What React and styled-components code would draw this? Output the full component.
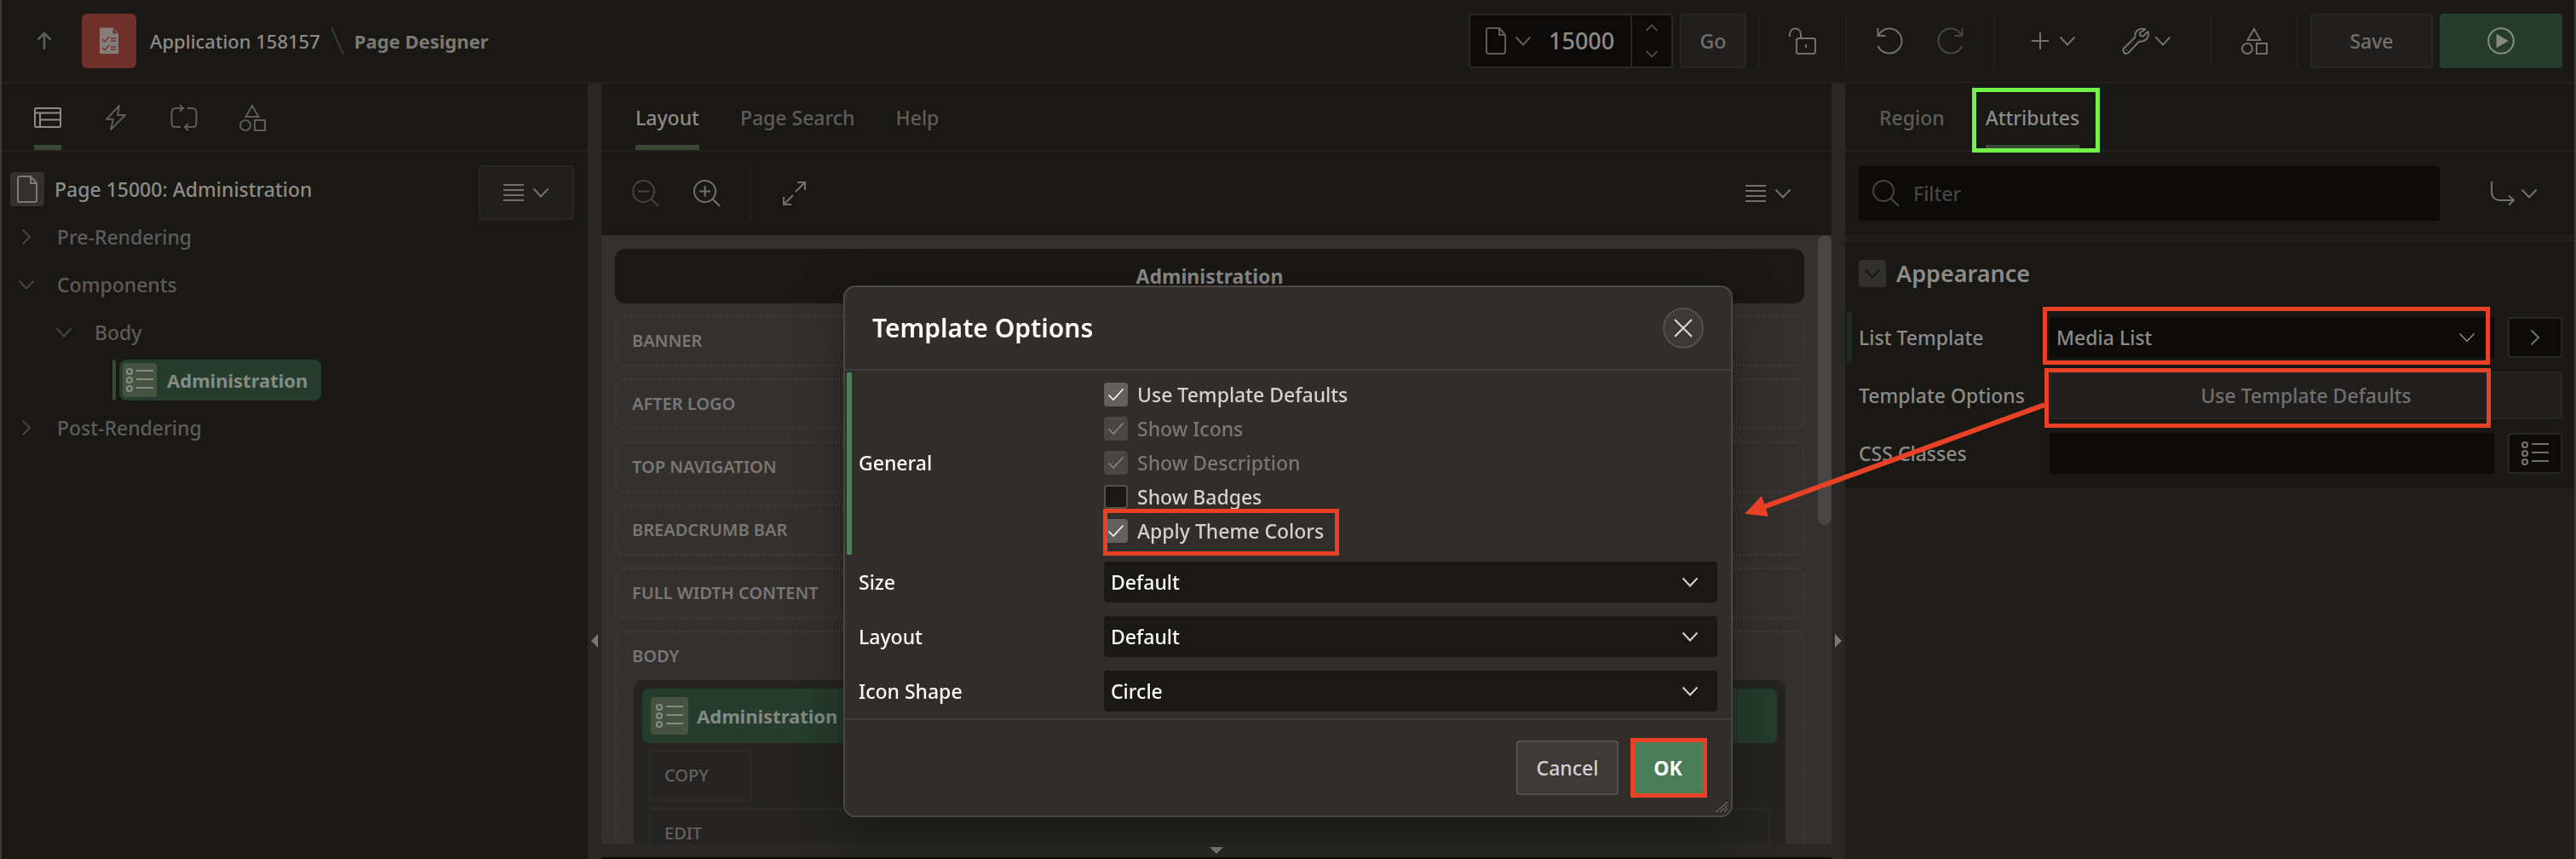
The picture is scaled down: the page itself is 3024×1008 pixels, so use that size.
import React from "react";
import styled, { createGlobalStyle, css } from "styled-components";

const c = {
  bg: "#191815",
  field: "#0c0b09",
  raised: "#201f1d",
  line: "#22211f",
  split: "#282725",
  canvas: "#33302e",
  text: "#8d8b88",
  soft: "#72706d",
  mute: "#5e5c59",
  faint: "#474542",
  green: "#263c2d",
  red: "#e94126",
  lime: "#71f447",
};

const Global = createGlobalStyle`
  *, *::before, *::after { box-sizing: border-box; }
  body { margin: 0; background: ${c.bg}; }
  body, button, input, select {
    font-family: "Noto Sans", "Open Sans", sans-serif;
    font-size: 23px;
    font-weight: 500;
    line-height: 32px;
  }
  button { padding: 0; margin: 0; border: 0; background: none; color: inherit; cursor: pointer; }
  svg { display: block; flex: none; }
  ul, h1, h2, fieldset { margin: 0; padding: 0; list-style: none; border: 0; }
`;

/* ---------- icons ---------- */

const Svg = ({ w = 32, h = w, sw = 2, children, ...rest }) => (
  <svg width={w} height={h} viewBox={`0 0 ${w} ${h}`} fill="none" stroke="currentColor" strokeWidth={sw} aria-hidden="true" {...rest}>
    {children}
  </svg>
);
const ChevronDown = (p) => <Svg w={20} h={12} {...p}><path d="M1.500 1.500L10 10.500L18.500 1.500" /></Svg>;
const ChevronRight = (p) => <Svg w={12} h={20} {...p}><path d="M1.500 1.500L10 10L1.500 18.500" /></Svg>;
const CheckMark = (p) => <Svg w={20} h={16} sw={1.6} {...p}><path d="M1.500 8.500L7 14L18.500 1.500" /></Svg>;
const SpinUp = () => <Svg w={16} h={9} sw={1.5}><path d="M1.500 8L8 1.500L14.500 8" /></Svg>;
const SpinDown = () => <Svg w={16} h={9} sw={1.5}><path d="M1.500 1L8 7.500L14.500 1" /></Svg>;
const ArrowUp = () => <Svg sw={2.5}><path d="M16 26V7M8.500 14.500L16 7L23.500 14.500" /></Svg>;
const FileIcon = () => <Svg><path d="M5 3a2 2 0 0 1 2-2h13l7 8v20a2 2 0 0 1-2 2H7a2 2 0 0 1-2-2zM20 1v8h7" /></Svg>;
const Layout = () => <Svg><rect x="1" y="5" width="30" height="22" rx="1.500" /><path d="M1 10.500h30M7 10.500V27M7 18.500h24" /></Svg>;
const Bolt = () => <Svg><path d="M20 2L5 18h8L10 30L27 13h-9z" strokeLinejoin="round" /></Svg>;
const Cycle = () => <Svg><path d="M12 27H6a4.500 4.500 0 0 1-4.500-4.500v-13A4.500 4.500 0 0 1 6 5h8M11 1l4 4-4 4M20 5h6a4.500 4.500 0 0 1 4.500 4.500v13A4.500 4.500 0 0 1 26 27h-8M21 23l-4 4 4 4" /></Svg>;
const Shapes = () => <Svg><path d="M16 2L23.500 15H8.500z" /><circle cx="8" cy="25" r="6" /><rect x="19" y="19" width="12" height="12" /></Svg>;
const Bars = () => <Svg w={24} h={22}><path d="M0 2h24M0 8h24M0 14h24M0 20h24" /></Svg>;
const ListIcon = () => <Svg sw={2.2}><circle cx="4" cy="6" r="3" /><circle cx="4" cy="16" r="3" /><circle cx="4" cy="26" r="3" /><path d="M12 5h20M12 15h20M12 25h20" /></Svg>;
const Zoom = ({ plus }) => <Svg><circle cx="13.500" cy="13.500" r="12.500" /><path d={`M22 22L31 31M7 13.500h13${plus ? "M13.500 7v13" : ""}`} /></Svg>;
const Search = () => <Svg><circle cx="13" cy="13" r="12" /><path d="M21.500 21.500L31 31" /></Svg>;
const Expand = () => <Svg><path d="M20 3h9v9M29 3L18 14M13 29H4V20M4 29L15 18" /></Svg>;
const Unlock = () => <Svg><rect x="9" y="13" width="22" height="18" rx="2" /><path d="M1 11V8a6.500 6.500 0 0 1 13 0v5M20 20v4" /></Svg>;
const Undo = () => <Svg><path d="M2.500 1v9h9M3 10C6 4 10.500 1.500 16 1.500c8 0 14.500 6.500 14.500 14.500S24 30.500 16 30.500C10 30.500 5 27.500 2.500 22" /></Svg>;
const Redo = () => <Svg><path d="M29.500 1v9h-9M29 10C26 4 21.500 1.500 16 1.500C8 1.500 1.500 8 1.500 16S8 30.500 16 30.500c6 0 11-3 13.500-8.500" /></Svg>;
const Plus = () => <Svg><path d="M16 6v20M6 16h20" /></Svg>;
const Wrench = () => <Svg strokeLinejoin="round"><path d="M27.500 2.500C22 .200 16.500 3.200 15.500 8c-.300 1.500 0 3-.200 3.700L2.500 24.500c-2 2.200-1 6.500 2.500 6.500 1 0 2-.500 2.700-1.200L20 16.700c1-.200 2.300.100 3.700-.200C29.500 15.500 32.500 10 30.500 5L25 10.500l-3.500-.500-.500-3.500z" /><path d="M5 27h1" /></Svg>;
const Play = () => <Svg><circle cx="16" cy="16" r="14.800" /><path d="M11 8.500L24 16L11 23.500z" fill="currentColor" strokeWidth="1" /></Svg>;
const Goto = () => <Svg><path d="M4 2v13a9 9 0 0 0 9 9h17M24 18.500l6 5.500-6 5.500" /></Svg>;
const Close = () => <Svg w={24}><path d="M2 2L22 22M22 2L2 22" /></Svg>;
const AppGlyph = () => (
  <Svg w={24} h={32} stroke="none">
    <path d="M1 0.500h15l7 7.500v23H1z" fill="#847d7a" />
    <path d="M16 0.500v7.500h7z" fill="#6f302c" stroke="#847d7a" strokeWidth="1" />
    <path d="M4 14l3 3 5-6M4 24l3 3 5-6M14 13h6M14 16h6M14 23h6M14 26h6" stroke="#6f302c" strokeWidth="1.500" />
  </Svg>
);
const Slash = () => <Svg w={16} h={34} stroke="#3b3936"><path d="M1 1L15 33" /></Svg>;

/* ---------- shared parts ---------- */

const Shell = styled.div`
  display: flex;
  flex-direction: column;
  height: 100vh;
  border: solid #3b3a39;
  border-width: 0 2px;
  color: ${c.text};
`;

const Callout = styled.span`
  position: absolute;
  z-index: 3;
  inset: ${(p) => p.$inset};
  border: 5px solid ${(p) => p.$color || c.red};
  pointer-events: none;
`;

const IconButton = styled.button`
  display: flex;
  align-items: center;
  justify-content: center;
  gap: ${(p) => p.$gap || 6}px;
  width: ${(p) => p.$width || 64}px;
  height: 64px;
  color: ${(p) => (p.$dim ? c.faint : c.soft)};
  ${(p) => p.$boxed && css`
    border: 2px solid ${c.split};
    border-radius: 4px;
    background: ${c.raised};
  `}
`;

const Divider = styled.span`
  width: 2px;
  height: 64px;
  margin: 0 18px;
  background: ${c.line};
`;

/* ---------- header ---------- */

const Header = styled.header`
  display: flex;
  align-items: center;
  justify-content: space-between;
  height: 98px;
  padding: 0 14px 0 34px;
  border-bottom: 2px solid ${c.line};
`;
const Crumbs = styled.nav`
  display: flex;
  align-items: center;
  gap: 12px;
`;
const UpLink = styled.a`
  margin-right: 16px;
  color: ${c.mute};
`;
const AppBadge = styled.span`
  display: grid;
  place-items: center;
  width: 64px;
  height: 64px;
  margin-right: 4px;
  border-radius: 6px;
  background: #6f302c;
`;
const Crumb = styled.a`
  color: ${(p) => (p.$current ? "#7b7976" : c.text)};
  font-weight: ${(p) => (p.$current ? 700 : 500)};
  font-size: 22px;
  text-decoration: none;
`;
const Tools = styled.div`
  display: flex;
`;
const ToolGroup = styled.div`
  display: flex;
  gap: ${(p) => p.$gap || 0}px;
  padding: ${(p) => p.$pad || "0 18px"};
  border-left: ${(p) => (p.$first ? 0 : 2)}px solid ${c.line};
`;
const PageField = styled.div`
  display: flex;
  align-items: center;
  width: 240px;
  height: 64px;
  border: 2px solid ${c.split};
  border-radius: 4px;
  background: ${c.field};
  color: ${c.mute};
`;
const PagePicker = styled.button`
  display: flex;
  align-items: center;
  gap: 6px;
  padding-left: 14px;
`;
const PageNumber = styled.input`
  flex: 1;
  min-width: 0;
  padding: 0 0 0 20px;
  border: 0;
  outline: 0;
  background: none;
  color: ${c.text};
  font-size: 27px;
`;
const Spinner = styled.div`
  display: flex;
  flex-direction: column;
  align-items: center;
  justify-content: space-between;
  width: 48px;
  height: 60px;
  padding: 10px 0;
  border-left: 2px solid ${c.split};
`;
const TextButton = styled.button`
  display: grid;
  place-items: center;
  width: ${(p) => p.$width}px;
  height: 64px;
  border: 2px solid ${(p) => (p.$hot ? c.green : c.split)};
  border-radius: 4px;
  background: ${(p) => (p.$hot ? c.green : c.raised)};
  color: ${(p) => (p.$hot ? "#868b84" : c.soft)};
`;

/* ---------- panels ---------- */

const Main = styled.main`
  display: grid;
  grid-template-columns: minmax(0, 688fr) 16px minmax(0, 1444fr) 16px minmax(0, 856fr);
  flex: 1;
  min-height: 0;
`;
const Panel = styled.section`
  display: flex;
  flex-direction: column;
  min-height: 0;
  background: ${(p) => p.$bg || c.bg};
`;
const Splitter = styled.div`
  display: flex;
  justify-content: center;
  padding-top: 646px;
  background: ${c.split};
  color: #7a7875;
`;
const BottomSplitter = styled.div`
  display: grid;
  place-items: center;
  height: 18px;
  border-bottom: 2px solid ${c.field};
  background: ${c.split};
  color: #7a7875;
`;
const TabBar = styled.div`
  display: flex;
  flex: none;
  gap: 48px;
  height: 80px;
  padding: 0 ${(p) => p.$pad || 40}px;
  border-bottom: 2px solid ${c.line};
  background: ${c.bg};
`;
const Tab = styled.button`
  position: relative;
  display: flex;
  align-items: center;
  height: 78px;
  padding-top: 8px;
  border-bottom: 6px solid ${(p) => (p["aria-selected"] ? "#3a4834" : "transparent")};
  color: ${(p) => (p["aria-selected"] ? c.text : c.mute)};
`;

/* ---------- tree ---------- */

const TreeArea = styled.div`
  display: flex;
  align-items: flex-start;
  padding: 16px 16px 0 10px;
`;
const Tree = styled.ul`
  flex: 1;
  min-width: 0;
`;
const Row = styled.li`
  display: flex;
  align-items: center;
  gap: ${(p) => p.$gap || 18}px;
  height: 56px;
  padding-left: ${(p) => p.$indent || 0}px;
  color: ${(p) => (p.$root ? c.text : c.mute)};
`;
const Toggle = styled.button`
  display: grid;
  place-items: center;
  width: 37px;
  height: 32px;
  color: ${c.faint};
`;
const TypeIcon = styled.span`
  display: grid;
  place-items: center;
  width: ${(p) => p.$size || 40}px;
  height: ${(p) => p.$size || 40}px;
  border-radius: 4px;
  background: ${(p) => (p.$green ? "#465341" : "#33302e")};
  color: ${(p) => (p.$green ? "#858a82" : "#7b7976")};
`;
const NodeMark = styled.span`
  width: 4px;
  height: 48px;
  border-radius: 2px;
  background: #3a4834;
`;
const Node = styled.span`
  display: flex;
  align-items: center;
  gap: 12px;
  height: 48px;
  padding: 0 16px 0 4px;
  border-radius: 8px;
  background: ${c.green};
  color: #858a82;
  font-weight: 700;
  font-size: 22px;
`;

/* ---------- canvas ---------- */

const CanvasTools = styled.div`
  display: flex;
  flex: none;
  align-items: center;
  height: 98px;
  padding: 0 18px 0 20px;
  background: ${c.bg};
`;
const Push = styled.span`
  flex: 1;
`;
const Canvas = styled.div`
  position: relative;
  display: flex;
  flex: 1;
  flex-direction: column;
  gap: 14px;
  min-height: 0;
  padding: 16px 32px 0 16px;
  overflow: hidden;
  background: ${c.canvas};
`;
const ScrollThumb = styled.span`
  position: absolute;
  top: 0;
  right: 0;
  width: 16px;
  height: 340px;
  border-radius: 8px;
  background: #474644;
`;
const PageTitle = styled.h2`
  display: grid;
  flex: none;
  place-items: center;
  height: 64px;
  border-radius: 12px;
  background: ${c.bg};
  font-size: 23px;
  font-weight: 700;
`;
const Slot = styled.div`
  flex: none;
  border: 2px dotted #3f3d3a;
  border-radius: 10px;
`;
const SlotLabel = styled.div`
  display: flex;
  align-items: center;
  height: 56px;
  padding: 0 18px;
  color: #797774;
  font-size: 20px;
  font-weight: 600;
`;
const Region = styled.div`
  display: flex;
  flex-direction: column;
  align-items: flex-start;
  gap: 8px;
  height: 260px;
  margin: 0 20px;
  padding: 10px;
  border-radius: 10px;
  background: #252422;
`;
const RegionHead = styled.div`
  display: flex;
  flex: none;
  align-self: stretch;
  align-items: center;
  gap: 10px;
  height: 64px;
  padding: 0 10px;
  border-radius: 8px;
  background: ${c.green};
  color: #858a82;
  font-size: 22px;
  font-weight: 700;
`;
const ButtonSlot = styled.div`
  display: flex;
  flex: none;
  align-items: center;
  align-self: ${(p) => (p.$wide ? "stretch" : "flex-start")};
  height: 60px;
  min-width: 120px;
  margin: 0 8px;
  padding: 0 16px;
  border: 2px dotted #33312f;
  border-radius: 4px;
  color: #63615e;
  font-size: 20px;
`;

/* ---------- property editor ---------- */

const FilterBar = styled.div`
  display: flex;
  flex: none;
  align-items: center;
  gap: 14px;
  height: 106px;
  padding-left: 16px;
  border-bottom: 8px solid ${c.raised};
  background: ${c.bg};
`;
const FilterBox = styled.label`
  display: flex;
  flex: 1;
  align-items: center;
  gap: 16px;
  height: 64px;
  padding: 0 16px;
  border-radius: 4px;
  background: ${c.field};
  color: ${c.faint};
`;
const FilterInput = styled.input`
  flex: 1;
  min-width: 0;
  padding: 0;
  border: 0;
  outline: 0;
  background: none;
  color: ${c.text};
  &::placeholder { color: ${c.faint}; opacity: 1; }
`;
const Group = styled.div`
  display: flex;
  flex-direction: column;
  gap: 8px;
  padding-bottom: 10px;
  background: ${c.bg};
`;
const GroupTitle = styled.h2`
  display: flex;
  align-items: center;
  gap: 12px;
  height: 74px;
  padding-left: 16px;
  font-size: 27px;
  font-weight: 600;
`;
const GroupToggle = styled.button`
  display: grid;
  place-items: center;
  width: 32px;
  height: 32px;
  border-radius: 4px;
  background: #31302c;
  color: #161513;
`;
const Property = styled.div`
  display: grid;
  grid-template-columns: 224px minmax(0, 1fr);
  align-items: center;
  height: 60px;
  margin-left: 2px;
  padding: 0 14px 0 8px;
  border-left: 6px solid ${(p) => (p.$changed ? "#1f2b22" : "transparent")};
`;
const Controls = styled.div`
  position: relative;
  display: flex;
  gap: 16px;
`;
const SelectWrap = styled.div`
  position: relative;
  display: flex;
  flex: 1;
  align-items: center;
  color: ${(p) => (p.$bright ? "#d6d4d1" : c.text)};
  svg { position: absolute; right: 22px; pointer-events: none; }
`;
const Select = styled.select`
  appearance: none;
  width: 100%;
  height: 48px;
  padding: 0 48px 0 8px;
  border: 0;
  border-radius: 4px;
  background: ${(p) => (p.$bright ? "#191815" : c.field)};
  color: ${(p) => (p.$bright ? "#fcfbfa" : c.text)};
`;
const TextInput = styled.input`
  flex: 1;
  min-width: 0;
  height: 48px;
  border: 0;
  border-radius: 4px;
  background: ${c.field};
  color: ${c.text};
`;
const SideButton = styled.button`
  display: grid;
  place-items: center;
  width: 64px;
  height: 48px;
  border: 2px solid ${c.split};
  border-radius: 4px;
  background: ${c.field};
  color: ${c.soft};
`;
const OptionsButton = styled.button`
  flex: 1;
  height: 56px;
  border: 2px solid ${c.split};
  border-radius: 4px;
  background: ${c.raised};
  color: ${c.soft};
`;
const Pointer = styled.svg`
  position: absolute;
  z-index: 3;
  top: 34px;
  right: calc(100% + 6px);
  pointer-events: none;
`;

/* ---------- dialog ---------- */

const Overlay = styled.div`
  position: fixed;
  inset: 0;
  display: flex;
  align-items: flex-start;
  justify-content: center;
  padding-top: 335px;
  pointer-events: none;
`;
const Dialog = styled.div`
  position: relative;
  width: 1044px;
  border: 2px solid #4b4744;
  border-radius: 14px;
  background: #312d2a;
  color: #fcfbfa;
  box-shadow: 0 16px 56px rgba(0, 0, 0, 0.36);
  pointer-events: auto;
`;
const DialogHead = styled.div`
  display: flex;
  align-items: center;
  justify-content: space-between;
  height: 98px;
  padding: 0 32px;
  border-bottom: 2px solid #403c39;
`;
const DialogTitle = styled.h1`
  font-size: 30px;
  font-weight: 600;
`;
const CloseButton = styled.button`
  display: grid;
  place-items: center;
  width: 48px;
  height: 48px;
  border: 2px solid #54504c;
  border-radius: 50%;
  background: #3d3936;
  color: #dedcda;
`;
const DialogBody = styled.div`
  padding: 2px 16px 0 2px;
`;
const Option = styled.div`
  display: grid;
  grid-template-columns: 288px minmax(0, 1fr);
  align-items: center;
  min-height: 64px;
  padding: ${(p) => (p.$changed ? "6px 0 8px 8px" : "0 0 0 8px")};
  border-left: 6px solid ${(p) => (p.$changed ? "#4a8059" : "transparent")};
`;
const Checks = styled.div`
  display: flex;
  flex-direction: column;
  align-items: flex-start;
`;
const Check = styled.label`
  position: relative;
  display: flex;
  align-items: center;
  gap: 11px;
  height: 40px;
  color: ${(p) => (p.$off ? "#7b7774" : "#d3d1ce")};
`;
const TickBox = styled.span`
  display: grid;
  place-items: center;
  color: ${(p) => (p.$off ? "#8a8683" : "#fcfbfa")};
  > * { grid-area: 1 / 1; }
  svg { display: none; pointer-events: none; }
  input:checked + svg { display: block; }
`;
const Tick = styled.input`
  appearance: none;
  width: 28px;
  height: 28px;
  margin: 0;
  border: 2px solid #55504d;
  border-radius: 4px;
  background: #191815;
  &:checked { border: 0; background: #65605c; }
  &:checked:disabled { background: #4a4643; }
`;
const DialogFoot = styled.div`
  display: flex;
  justify-content: flex-end;
  gap: 16px;
  height: 114px;
  padding: 24px 32px;
  border-top: 2px solid #403c39;
`;
const DialogButton = styled.button`
  position: relative;
  width: ${(p) => (p.$primary ? 84 : 120)}px;
  height: 64px;
  border: 2px solid ${(p) => (p.$primary ? "#4a7d58" : "#54504c")};
  border-radius: 4px;
  background: ${(p) => (p.$primary ? "#4a7d58" : "#3d3936")};
  color: ${(p) => (p.$primary ? "#fff" : "#d3d1ce")};
  font-weight: ${(p) => (p.$primary ? 700 : 500)};
`;
const Grip = styled.svg`
  position: absolute;
  right: 3px;
  bottom: 3px;
`;

/* ---------- page ---------- */

const slots = ["BANNER", "AFTER LOGO", "TOP NAVIGATION", "BREADCRUMB BAR", "FULL WIDTH CONTENT"];
const checks = [
  { text: "Use Template Defaults", on: true },
  { text: "Show Icons", on: true, off: true },
  { text: "Show Description", on: true, off: true },
  { text: "Show Badges" },
  { text: "Apply Theme Colors", on: true, marked: true },
];
const choices = [["Size", "Default"], ["Layout", "Default"], ["Icon Shape", "Circle"]];

function TopBar() {
  return (
    <Header>
      <Crumbs aria-label="Breadcrumb">
        <UpLink href="#up" aria-label="Up"><ArrowUp /></UpLink>
        <AppBadge><AppGlyph /></AppBadge>
        <Crumb href="#app">Application 158157</Crumb>
        <Slash />
        <Crumb href="#designer" $current>Page Designer</Crumb>
      </Crumbs>
      <Tools>
        <ToolGroup $first $gap={8} $pad="0 14px 0 0">
          <PageField>
            <PagePicker aria-label="Select page"><FileIcon /><ChevronDown /></PagePicker>
            <PageNumber aria-label="Page" defaultValue="15000" />
            <Spinner>
              <button aria-label="Next page"><SpinUp /></button>
              <button aria-label="Previous page"><SpinDown /></button>
            </Spinner>
          </PageField>
          <TextButton $width={78}>Go</TextButton>
        </ToolGroup>
        <ToolGroup><IconButton aria-label="Lock"><Unlock /></IconButton></ToolGroup>
        <ToolGroup $gap={8}>
          <IconButton aria-label="Undo"><Undo /></IconButton>
          <IconButton aria-label="Redo" $dim><Redo /></IconButton>
        </ToolGroup>
        <ToolGroup $pad="0 18px 0 10px">
          <IconButton aria-label="Create" $width={112}><Plus /><ChevronDown /></IconButton>
          <IconButton aria-label="Utilities" $width={112}><Wrench /><ChevronDown /></IconButton>
        </ToolGroup>
        <ToolGroup><IconButton aria-label="Shared Components"><Shapes /></IconButton></ToolGroup>
        <ToolGroup $gap={8} $pad="0 0 0 14px">
          <TextButton $width={144}>Save</TextButton>
          <TextButton $width={144} $hot aria-label="Run page"><Play /></TextButton>
        </ToolGroup>
      </Tools>
    </Header>
  );
}

function TreePanel() {
  return (
    <Panel>
      <TabBar role="tablist" $pad={38}>
        <Tab role="tab" aria-selected aria-label="Rendering"><Layout /></Tab>
        <Tab role="tab" aria-label="Dynamic Actions"><Bolt /></Tab>
        <Tab role="tab" aria-label="Processing"><Cycle /></Tab>
        <Tab role="tab" aria-label="Shared Components"><Shapes /></Tab>
      </TabBar>
      <TreeArea>
        <Tree>
          <Row $root $gap={12}><TypeIcon><FileIcon /></TypeIcon>Page 15000: Administration</Row>
          <Row><Toggle aria-label="Expand"><ChevronRight /></Toggle>Pre-Rendering</Row>
          <Row><Toggle aria-label="Collapse"><ChevronDown /></Toggle>Components</Row>
          <Row $indent={44}><Toggle aria-label="Collapse"><ChevronDown /></Toggle>Body</Row>
          <Row $indent={120} $gap={4}>
            <NodeMark />
            <Node><TypeIcon $green><ListIcon /></TypeIcon>Administration</Node>
          </Row>
          <Row><Toggle aria-label="Expand"><ChevronRight /></Toggle>Post-Rendering</Row>
        </Tree>
        <IconButton $boxed $gap={10} $width={112} aria-label="Tree menu"><Bars /><ChevronDown /></IconButton>
      </TreeArea>
    </Panel>
  );
}

function LayoutPanel() {
  return (
    <Panel>
      <TabBar role="tablist">
        <Tab role="tab" aria-selected>Layout</Tab>
        <Tab role="tab">Page Search</Tab>
        <Tab role="tab">Help</Tab>
      </TabBar>
      <CanvasTools>
        <ToolGroup $first $gap={8} $pad="0">
          <IconButton $dim aria-label="Zoom out"><Zoom /></IconButton>
          <IconButton aria-label="Zoom in"><Zoom plus /></IconButton>
        </ToolGroup>
        <Divider />
        <IconButton aria-label="Expand"><Expand /></IconButton>
        <Push />
        <IconButton $gap={10} $width={112} aria-label="Layout menu"><Bars /><ChevronDown /></IconButton>
      </CanvasTools>
      <Canvas>
        <PageTitle>Administration</PageTitle>
        {slots.map((name) => (
          <Slot key={name}><SlotLabel>{name}</SlotLabel></Slot>
        ))}
        <Slot>
          <SlotLabel>BODY</SlotLabel>
          <Region>
            <RegionHead><TypeIcon $green $size={44}><ListIcon /></TypeIcon>Administration</RegionHead>
            <ButtonSlot>COPY</ButtonSlot>
            <ButtonSlot $wide>EDIT</ButtonSlot>
          </Region>
        </Slot>
        <ScrollThumb />
      </Canvas>
      <BottomSplitter>
        <Svg w={16} h={8} stroke="none"><path d="M0 0h16L8 8z" fill="currentColor" /></Svg>
      </BottomSplitter>
    </Panel>
  );
}

function PropertyPanel() {
  return (
    <Panel $bg={c.raised}>
      <TabBar role="tablist">
        <Tab role="tab">Region</Tab>
        <Tab role="tab" aria-selected>Attributes<Callout $inset="5px -24px -9px -16px" $color={c.lime} /></Tab>
      </TabBar>
      <FilterBar>
        <FilterBox>
          <Search />
          <FilterInput placeholder="Filter" aria-label="Filter" />
        </FilterBox>
        <IconButton $width={144} aria-label="Go to group"><Goto /><ChevronDown /></IconButton>
      </FilterBar>
      <Group>
        <GroupTitle>
          <GroupToggle aria-label="Collapse Appearance"><ChevronDown /></GroupToggle>
          Appearance
        </GroupTitle>
        <Property $changed>
          <label htmlFor="list-template">List Template</label>
          <Controls>
            <SelectWrap>
              <Select id="list-template"><option>Media List</option></Select>
              <ChevronDown sw={1.5} />
              <Callout $inset="-12px 5px -8px -8px" />
            </SelectWrap>
            <SideButton aria-label="Go to template"><ChevronRight /></SideButton>
          </Controls>
        </Property>
        <Property>
          <label htmlFor="template-options">Template Options</label>
          <Controls>
            <OptionsButton id="template-options">Use Template Defaults</OptionsButton>
            <Callout $inset="-4px 84px -10px -6px" />
            <Pointer width="356" height="142" viewBox="0 0 356 142" aria-hidden="true">
              <path d="M356 5L26 125" stroke={c.red} strokeWidth="6" />
              <path d="M4 133L24 112L32 136z" fill={c.red} />
            </Pointer>
          </Controls>
        </Property>
        <Property>
          <label htmlFor="css-classes">CSS Classes</label>
          <Controls>
            <TextInput id="css-classes" />
            <SideButton aria-label="Pick classes"><ListIcon /></SideButton>
          </Controls>
        </Property>
      </Group>
    </Panel>
  );
}

function TemplateDialog() {
  return (
    <Overlay>
      <Dialog role="dialog" aria-labelledby="dialog-title">
        <DialogHead>
          <DialogTitle id="dialog-title">Template Options</DialogTitle>
          <CloseButton aria-label="Close"><Close /></CloseButton>
        </DialogHead>
        <DialogBody>
          <Option $changed role="group" aria-labelledby="general-label">
            <span id="general-label">General</span>
            <Checks>
              {checks.map((o) => (
                <Check key={o.text} $off={o.off}>
                  <TickBox $off={o.off}>
                    <Tick type="checkbox" defaultChecked={o.on} disabled={o.off} />
                    <CheckMark />
                  </TickBox>
                  {o.text}
                  {o.marked && <Callout $inset="-6px -18px -9px -1px" />}
                </Check>
              ))}
            </Checks>
          </Option>
          {choices.map(([name, value]) => (
            <Option key={name}>
              <label htmlFor={`opt-${name}`}>{name}</label>
              <SelectWrap $bright>
                <Select $bright id={`opt-${name}`}><option>{value}</option></Select>
                <ChevronDown />
              </SelectWrap>
            </Option>
          ))}
        </DialogBody>
        <DialogFoot>
          <DialogButton>Cancel</DialogButton>
          <DialogButton $primary>OK<Callout $inset="-5px -6px -5px -4px" /></DialogButton>
        </DialogFoot>
        <Grip width="16" height="14" viewBox="0 0 16 14" stroke="#8a8683" strokeWidth="1" aria-hidden="true">
          <path d="M1 13L15 1M6 13L15 5M11 13L15 9" />
        </Grip>
      </Dialog>
    </Overlay>
  );
}

export default function App() {
  return (
    <>
      <Global />
      <Shell>
        <TopBar />
        <Main>
          <TreePanel />
          <Splitter><Svg w={8} h={16} stroke="none"><path d="M8 0v16L0 8z" fill="currentColor" /></Svg></Splitter>
          <LayoutPanel />
          <Splitter><Svg w={8} h={16} stroke="none"><path d="M0 0v16L8 8z" fill="currentColor" /></Svg></Splitter>
          <PropertyPanel />
        </Main>
      </Shell>
      <TemplateDialog />
    </>
  );
}
